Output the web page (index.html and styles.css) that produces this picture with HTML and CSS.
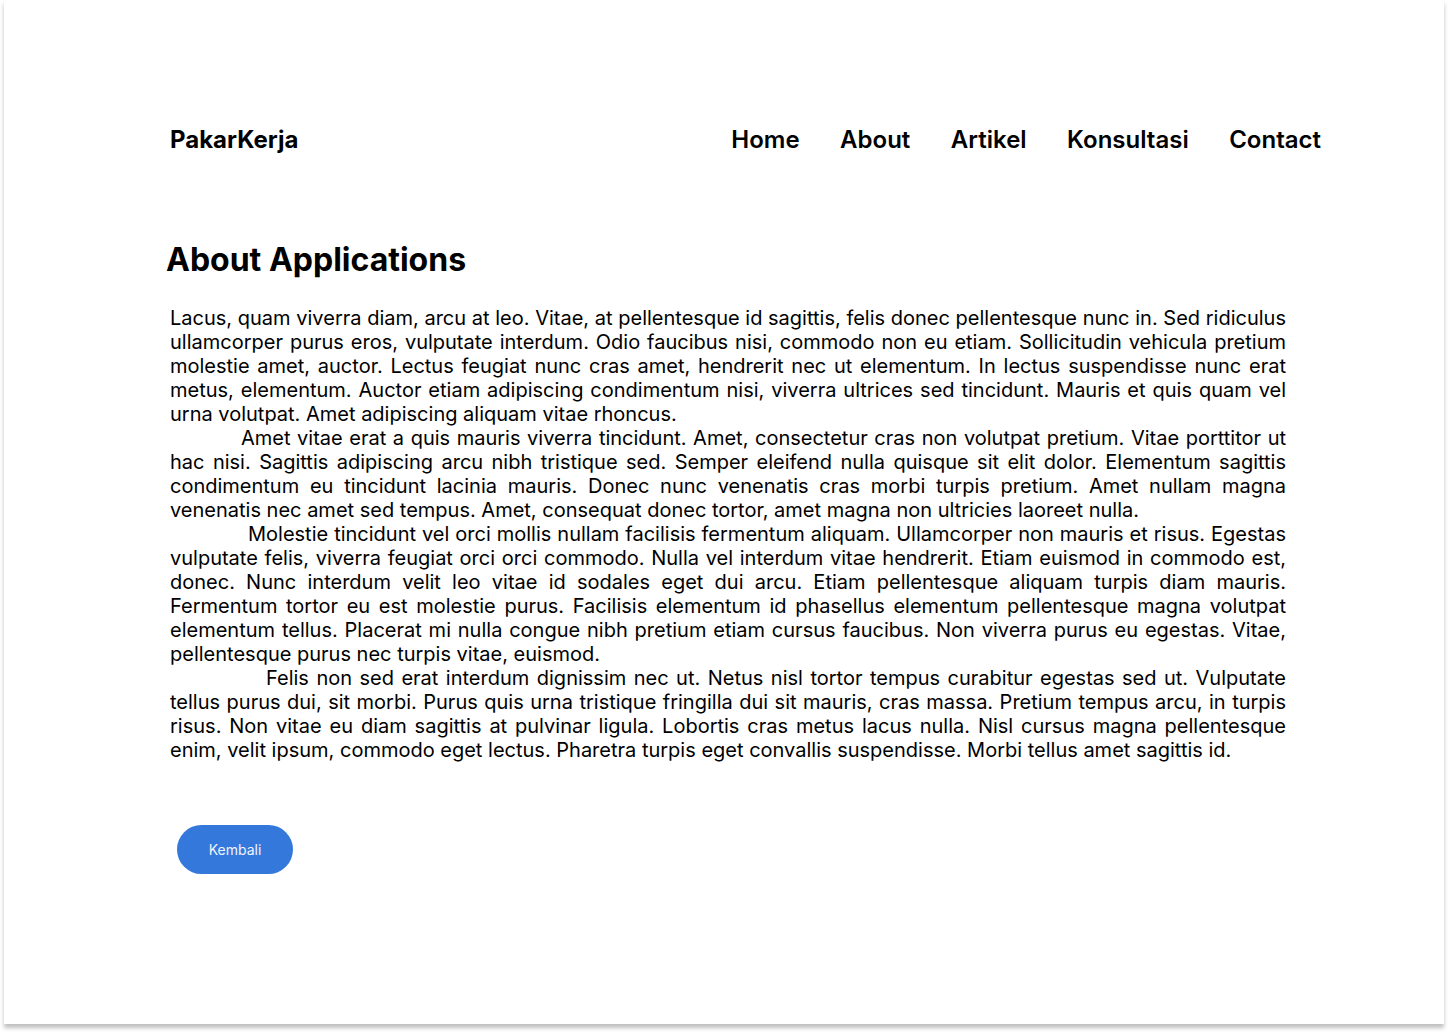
FILE: index.html
```html
<!DOCTYPE html>
<html lang="id">
<head>
<meta charset="utf-8">
<title>PakarKerja - About</title>
<link rel="stylesheet" href="styles.css">
</head>
<body>
<div class="frame">
  <header class="header">
    <div class="logo">PakarKerja</div>
    <nav class="nav">
      <a href="#">Home</a>
      <a href="#">About</a>
      <a href="#">Artikel</a>
      <a href="#">Konsultasi</a>
      <a href="#">Contact</a>
    </nav>
  </header>
  <main class="content">
    <h1 class="title">About Applications</h1>
    <div class="text">
      <p>Lacus, quam viverra diam, arcu at leo. Vitae, at pellentesque id sagittis, felis donec pellentesque nunc in. Sed ridiculus ullamcorper purus eros, vulputate interdum. Odio faucibus nisi, commodo non eu etiam. Sollicitudin vehicula pretium molestie amet, auctor. Lectus feugiat nunc cras amet, hendrerit nec ut elementum. In lectus suspendisse nunc erat metus, elementum. Auctor etiam adipiscing condimentum nisi, viverra ultrices sed tincidunt. Mauris et quis quam vel urna volutpat. Amet adipiscing aliquam vitae rhoncus.</p>
      <p class="i1">Amet vitae erat a quis mauris viverra tincidunt. Amet, consectetur cras non volutpat pretium. Vitae porttitor ut hac nisi. Sagittis adipiscing arcu nibh tristique sed. Semper eleifend nulla quisque sit elit dolor. Elementum sagittis condimentum eu tincidunt lacinia mauris. Donec nunc venenatis cras morbi turpis pretium. Amet nullam magna venenatis nec amet sed tempus. Amet, consequat donec tortor, amet magna non ultricies laoreet nulla.</p>
      <p class="i2">Molestie tincidunt vel orci mollis nullam facilisis fermentum aliquam. Ullamcorper non mauris et risus. Egestas vulputate felis, viverra feugiat orci orci commodo. Nulla vel interdum vitae hendrerit. Etiam euismod in commodo est, donec. Nunc interdum velit leo vitae id sodales eget dui arcu. Etiam pellentesque aliquam turpis diam mauris. Fermentum tortor eu est molestie purus. Facilisis elementum id phasellus elementum pellentesque magna volutpat elementum tellus. Placerat mi nulla congue nibh pretium etiam cursus faucibus. Non viverra purus eu egestas. Vitae, pellentesque purus nec turpis vitae, euismod.</p>
      <p class="i3">Felis non sed erat interdum dignissim nec ut. Netus nisl tortor tempus curabitur egestas sed ut. Vulputate tellus purus dui, sit morbi. Purus quis urna tristique fringilla dui sit mauris, cras massa. Pretium tempus arcu, in turpis risus. Non vitae eu diam sagittis at pulvinar ligula. Lobortis cras metus lacus nulla. Nisl cursus magna pellentesque enim, velit ipsum, commodo eget lectus. Pharetra turpis eget convallis suspendisse. Morbi tellus amet sagittis id.</p>
    </div>
    <button class="btn" type="button">Kembali</button>
  </main>
</div>
</body>
</html>
```

FILE: styles.css
```css
* { box-sizing: border-box; }
html, body { margin: 0; padding: 0; background: #ffffff; }
body {
  font-family: Inter, "Noto Sans", sans-serif;
  color: #000;
  padding-left: 4px;
  height: 1032px;
  overflow: hidden;
}
.frame {
  width: 1440px;
  height: 1024px;
  background: #fff;
  box-shadow: 0 4px 4px rgba(0,0,0,0.25);
  padding: 116px 123px 0 162px;
}
.header {
  display: flex;
  justify-content: space-between;
  align-items: center;
  height: 46px;
}
.logo {
  font-size: 24px;
  font-weight: 700;
  padding-left: 4px;
}
.nav {
  display: flex;
  gap: 40.5px;
}
.nav a {
  font-size: 24px;
  font-weight: 600;
  color: #000;
  text-decoration: none;
}
.title {
  font-size: 32px;
  font-weight: 700;
  margin: 76px 0 0 0;
  line-height: 44px;
}
.text {
  margin: 24px 0 0 4px;
  width: 1116px;
  font-size: 20px;
  line-height: 24px;
  text-align: justify;
}
.text p { margin: 0; }
.text .i1 { text-indent: 71px; }
.text .i2 { text-indent: 78px; }
.text .i3 { text-indent: 96px; }
.btn {
  display: block;
  margin: 63px 0 0 11px;
  width: 116px;
  height: 49px;
  border: none;
  border-radius: 25px;
  background: #3478db;
  color: #f0f4fc;
  font-family: Inter, sans-serif;
  font-size: 14px;
  font-weight: 400;
  cursor: pointer;
}
```
